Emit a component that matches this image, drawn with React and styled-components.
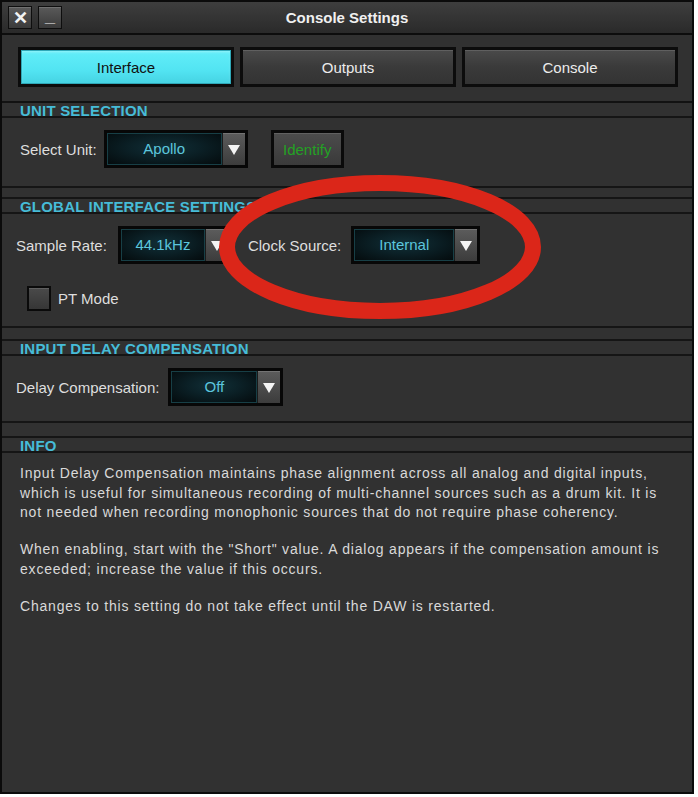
import styled, { createGlobalStyle, css } from "styled-components";

const GlobalStyle = createGlobalStyle`
  html, body {
    margin: 0;
    padding: 0;
    background: #ffffff;
  }
  * {
    box-sizing: border-box;
  }
`;

const FONT = `"Liberation Sans", Arial, sans-serif`;

const Window = styled.div`
  position: relative;
  width: 694px;
  height: 794px;
  border: 2px solid #0b0b0b;
  background: #313131;
  font-family: ${FONT};
  display: flex;
  flex-direction: column;
  overflow: hidden;
`;

const TitleBar = styled.div`
  position: relative;
  height: 33px;
  flex: none;
  display: flex;
  align-items: center;
  gap: 6px;
  padding: 0 6px;
  background: linear-gradient(#3e3e3e, #2a2a2a);
  border-bottom: 2px solid #0d0d0d;
`;

const WinButton = styled.div`
  width: 24px;
  height: 23px;
  display: flex;
  align-items: ${(p) => (p.$low ? "flex-end" : "center")};
  justify-content: center;
  padding-bottom: ${(p) => (p.$low ? 3 : 0)}px;
  border: 1px solid #0e0e0e;
  background: linear-gradient(#5a5a5a, #3a3a3a);
  box-shadow: inset 0 1px 0 rgba(255, 255, 255, 0.15);
  color: #f2f2f2;
  font-weight: bold;
  font-size: 18px;
  line-height: 1;
`;

const Title = styled.div`
  position: absolute;
  left: 0;
  right: 0;
  text-align: center;
  color: #f0f0f0;
  font-weight: bold;
  font-size: 15px;
  pointer-events: none;
`;

const TabRow = styled.div`
  flex: none;
  display: grid;
  grid-template-columns: 216px 216px 216px;
  gap: 6px;
  padding: 12px 16px 14px;
  border-bottom: 2px solid #121212;
`;

const Tab = styled.div`
  height: 40px;
  display: flex;
  align-items: center;
  justify-content: center;
  border: 3px solid #0c0c0c;
  font-size: 15px;
  color: #ececec;
  background: linear-gradient(#4a4a4a, #3a3a3a 50%, #333333);
  box-shadow: inset 0 1px 0 rgba(255, 255, 255, 0.12);
  ${(p) =>
    p.$active &&
    css`
      color: #101010;
      background: linear-gradient(#62eef9, #52e4f2 60%, #45d2e2);
      box-shadow: inset 0 0 0 1px #2fa8b8, inset 0 2px 3px rgba(255, 255, 255, 0.35);
    `}
`;

const Band = styled.div`
  flex: none;
  height: ${(p) => p.$h}px;
  border-bottom: 2px solid #151515;
`;

const Header = styled.div`
  flex: none;
  height: 15px;
  padding-left: 18px;
  border-bottom: 2px solid #151515;
  color: #46bcd8;
  font-weight: bold;
  font-size: 15px;
  line-height: 15px;
  letter-spacing: 0.2px;
  white-space: nowrap;
`;

const Section = styled.div`
  flex: none;
  height: ${(p) => p.$h}px;
  padding: ${(p) => p.$pad};
  border-bottom: 2px solid #151515;
  display: flex;
  flex-direction: column;
  gap: 22px;
`;

const Row = styled.div`
  display: flex;
  align-items: center;
  padding-left: ${(p) => p.$indent ?? 0}px;
`;

const Label = styled.span`
  color: #dedede;
  font-size: 15px;
  margin-right: ${(p) => p.$mr ?? 0}px;
  white-space: nowrap;
`;

const Drop = styled.div`
  display: flex;
  height: 38px;
  padding: 3px;
  background: #070707;
  margin-right: ${(p) => p.$mr ?? 0}px;
`;

const DropValue = styled.div`
  width: ${(p) => p.$w}px;
  display: flex;
  align-items: center;
  justify-content: center;
  padding-bottom: 2px;
  border: 1px solid #173f46;
  background: radial-gradient(ellipse at 50% 45%, #113038 0%, #0b2026 45%, #040b0d 100%);
  color: #5cc6dd;
  font-size: 15px;
`;

const DropArrow = styled.div`
  width: 23px;
  display: flex;
  align-items: center;
  justify-content: center;
  background: linear-gradient(#5c5c5c, #3c3c3c);
  border-left: 1px solid #1a1a1a;
  box-shadow: inset 0 1px 0 rgba(255, 255, 255, 0.15);
`;

const Triangle = styled.span`
  width: 0;
  height: 0;
  border-left: 6px solid transparent;
  border-right: 6px solid transparent;
  border-top: 10px solid #f4f4f4;
  margin-top: 2px;
`;

const GreenButton = styled.div`
  width: 73px;
  height: 38px;
  display: flex;
  align-items: center;
  justify-content: center;
  border: 3px solid #0a0a0a;
  background: linear-gradient(#4c4c4c, #3a3a3a);
  box-shadow: inset 0 1px 0 rgba(255, 255, 255, 0.12);
  color: #24a124;
  font-size: 15px;
`;

const Check = styled.div`
  width: 24px;
  height: 25px;
  margin-right: 7px;
  border: 2px solid #0a0a0a;
  background: linear-gradient(#4a4a4a, #363636);
  box-shadow: inset 0 1px 0 rgba(255, 255, 255, 0.12);
`;

const Info = styled.div`
  flex: 1;
  padding: 11px 10px 0 18px;
  color: #d9d9d9;
  font-size: 14px;
  line-height: 19.5px;
  letter-spacing: 0.8px;
  white-space: nowrap;

  p {
    margin: 0 0 17.5px;
  }
`;

const Annotation = styled.svg`
  position: absolute;
  left: -2px;
  top: -2px;
  pointer-events: none;
`;

function Dropdown({ value, width, mr }) {
  return (
    <Drop $mr={mr}>
      <DropValue $w={width}>{value}</DropValue>
      <DropArrow>
        <Triangle />
      </DropArrow>
    </Drop>
  );
}

export default function App() {
  return (
    <>
      <GlobalStyle />
      <Window>
        <TitleBar>
          <WinButton>✕</WinButton>
          <WinButton $low>_</WinButton>
          <Title>Console Settings</Title>
        </TitleBar>

        <TabRow>
          <Tab $active>Interface</Tab>
          <Tab>Outputs</Tab>
          <Tab>Console</Tab>
        </TabRow>

        <Header>UNIT SELECTION</Header>
        <Section $h={70} $pad="12px 0 0 18px">
          <Row>
            <Label $mr={7}>Select Unit:</Label>
            <Dropdown value="Apollo" width={115} mr={23} />
            <GreenButton>Identify</GreenButton>
          </Row>
        </Section>

        <Band $h={11} />
        <Header>GLOBAL INTERFACE SETTINGS</Header>
        <Section $h={114} $pad="12px 0 0 14px">
          <Row>
            <Label $mr={11}>Sample Rate:</Label>
            <Dropdown value="44.1kHz" width={84} mr={17} />
            <Label $mr={10}>Clock Source:</Label>
            <Dropdown value="Internal" width={100} />
          </Row>
          <Row $indent={11}>
            <Check />
            <Label>PT Mode</Label>
          </Row>
        </Section>

        <Band $h={13} />
        <Header>INPUT DELAY COMPENSATION</Header>
        <Section $h={67} $pad="12px 0 0 14px">
          <Row>
            <Label $mr={9}>Delay Compensation:</Label>
            <Dropdown value="Off" width={86} />
          </Row>
        </Section>

        <Band $h={15} />
        <Header>INFO</Header>
        <Info>
          <p>
            Input Delay Compensation maintains phase alignment across all analog and digital inputs,
            <br />
            which is useful for simultaneous recording of multi-channel sources such as a drum kit. It is
            <br />
            not needed when recording monophonic sources that do not require phase coherency.
          </p>
          <p>
            When enabling, start with the "Short" value. A dialog appears if the compensation amount is
            <br />
            exceeded; increase the value if this occurs.
          </p>
          <p>Changes to this setting do not take effect until the DAW is restarted.</p>
        </Info>

        <Annotation width="698" height="797" viewBox="0 0 698 797">
          <ellipse
            cx="380"
            cy="247"
            rx="153"
            ry="64"
            fill="none"
            stroke="#db2619"
            strokeWidth="16"
          />
        </Annotation>
      </Window>
    </>
  );
}
